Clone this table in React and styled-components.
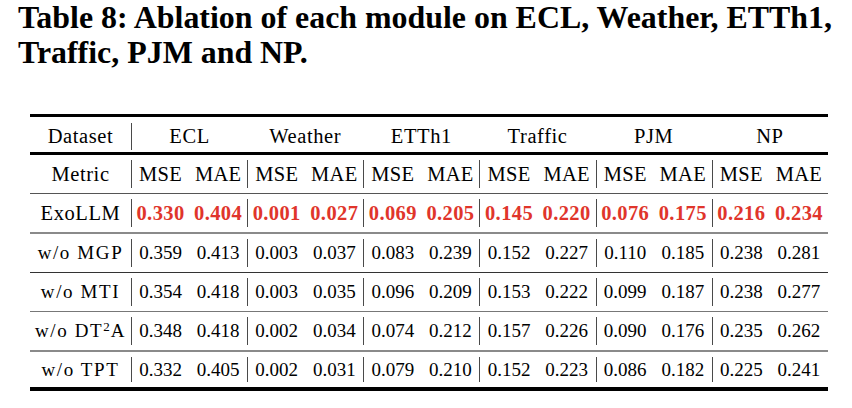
import React from "react";
import styled, { createGlobalStyle } from "styled-components";

const GlobalStyle = createGlobalStyle`
    body {
        margin: 0;
        background: #ffffff;
    }
`;

const datasets = ["ECL", "Weather", "ETTh1", "Traffic", "PJM", "NP"];

const rows = [
    { label: "ExoLLM", best: true, height: 40, rule: "2px solid #8a8a8a", values: ["0.330", "0.404", "0.001", "0.027", "0.069", "0.205", "0.145", "0.220", "0.076", "0.175", "0.216", "0.234"] },
    { label: "w/o MGP", height: 39, rule: "1px solid #333333", values: ["0.359", "0.413", "0.003", "0.037", "0.083", "0.239", "0.152", "0.227", "0.110", "0.185", "0.238", "0.281"] },
    { label: "w/o MTI", height: 39, rule: "1px solid #777777", values: ["0.354", "0.418", "0.003", "0.035", "0.096", "0.209", "0.153", "0.222", "0.099", "0.187", "0.238", "0.277"] },
    { label: "w/o DT2A", sup: true, height: 40, rule: "2px solid #8a8a8a", values: ["0.348", "0.418", "0.002", "0.034", "0.074", "0.212", "0.157", "0.226", "0.090", "0.176", "0.235", "0.262"] },
    { label: "w/o TPT", height: 35, rule: "none", values: ["0.332", "0.405", "0.002", "0.031", "0.079", "0.210", "0.152", "0.223", "0.086", "0.182", "0.225", "0.241"] },
];

const App = () => {
    return (
        <Page>
            <GlobalStyle />
            <Caption>
                Table 8: Ablation of each module on ECL, Weather, ETTh1,
                <br />
                Traffic, PJM and NP.
            </Caption>
            <Table>
                <Row $pad="6px 0 2px" $height={38} $rule="3px solid #000000">
                    <Label>Dataset</Label>
                    {datasets.map((d, i) => (
                        <GroupHead key={d} $divider={i === 0}>{d}</GroupHead>
                    ))}
                </Row>
                <Row $height={39} $rule="1px solid #555555">
                    <Label>Metric</Label>
                    {datasets.map((d) => (
                        <React.Fragment key={d}>
                            <Head $divider>MSE</Head>
                            <Head>MAE</Head>
                        </React.Fragment>
                    ))}
                </Row>
                {rows.map((r) => (
                    <Row key={r.label} $height={r.height} $rule={r.rule}>
                        {r.sup ? (
                            <DataLabel>
                                w/o DT<Sup>2</Sup>A
                            </DataLabel>
                        ) : r.best ? (
                            <Label>{r.label}</Label>
                        ) : (
                            <DataLabel>{r.label}</DataLabel>
                        )}
                        {r.values.map((v, i) => (
                            <Value key={i} $divider={i % 2 === 0} $best={r.best}>{v}</Value>
                        ))}
                    </Row>
                ))}
            </Table>
        </Page>
    );
};

export default App;

const Page = styled.div`
    width: 852px;
    height: 408px;
    display: flex;
    flex-direction: column;
    overflow: hidden;
    font-family: "Liberation Serif", "Times New Roman", serif;
    color: #000000;
`;

const Caption = styled.div`
    margin: 0 0 44px 0;
    padding-left: 18px;
    font-weight: bold;
    font-size: 31.9px;
    line-height: 35px;
    white-space: nowrap;
`;

const Table = styled.div`
    margin-left: 30px;
    width: 798px;
    border-top: 3px solid #000000;
    border-bottom: 4px solid #000000;
    display: flex;
    flex-direction: column;
`;

const Row = styled.div`
    box-sizing: border-box;
    display: grid;
    grid-template-columns: 101px repeat(12, 1fr);
    align-items: stretch;
    height: ${(p) => p.$height}px;
    padding: ${(p) => p.$pad || "5px 0"};
    border-bottom: ${(p) => p.$rule};
`;

const Cell = styled.div`
    display: flex;
    align-items: center;
    justify-content: center;
    white-space: nowrap;
    border-left: ${(p) => (p.$divider ? "1px solid #4a4a4a" : "none")};
`;

const Label = styled(Cell)`
    font-size: 20.5px;
    letter-spacing: 0.6px;
`;

const DataLabel = styled(Cell)`
    font-size: 19px;
    letter-spacing: 1.6px;
`;

const Sup = styled.span`
    font-size: 13px;
    line-height: 1;
    align-self: flex-start;
    margin-top: 3px;
    letter-spacing: 0;
    margin-right: 1px;
`;

const GroupHead = styled(Cell)`
    grid-column: span 2;
    font-size: 20.5px;
    letter-spacing: 0.6px;
`;

const Head = styled(Cell)`
    font-size: 20.5px;
    letter-spacing: 0.3px;
`;

const Value = styled(Cell)`
    font-size: ${(p) => (p.$best ? "20.5px" : "19px")};
    font-weight: ${(p) => (p.$best ? "bold" : "normal")};
    color: ${(p) => (p.$best ? "#e0352b" : "#000000")};
    letter-spacing: ${(p) => (p.$best ? "0.4px" : "0")};
`;
